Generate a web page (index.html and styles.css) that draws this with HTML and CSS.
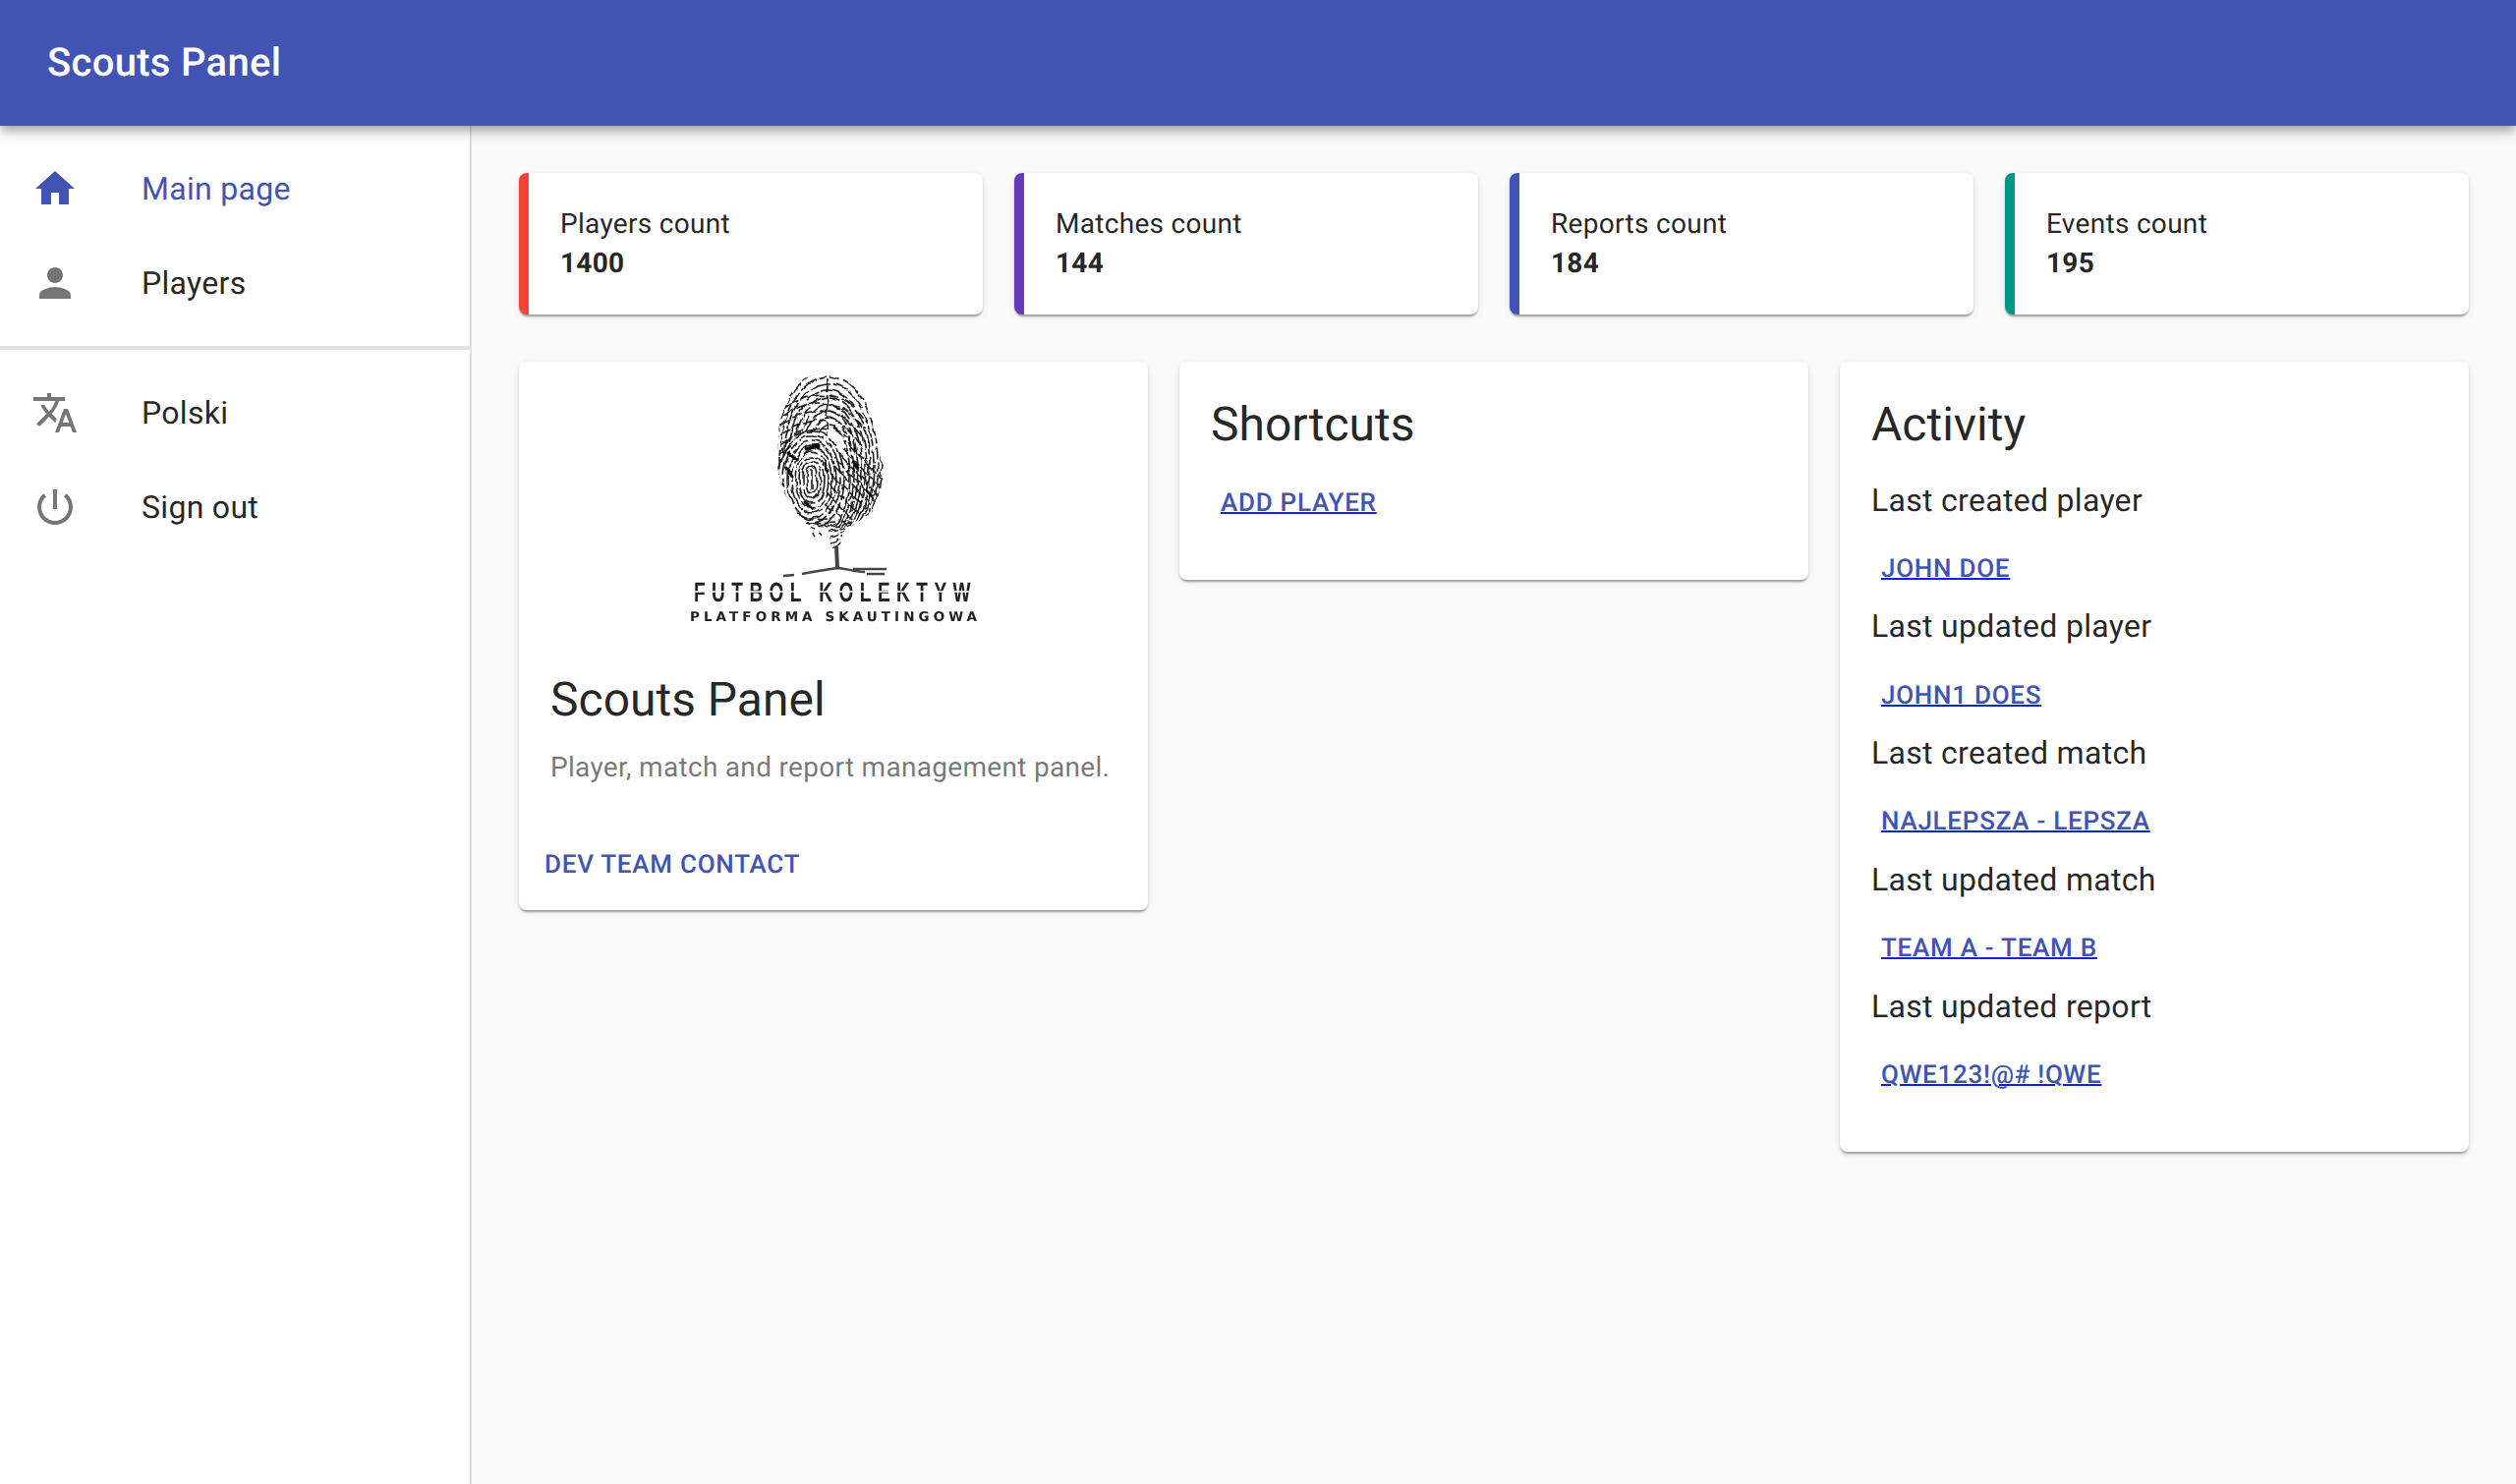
FILE: index.html
```html
<!DOCTYPE html>
<html lang="en">
<head>
<meta charset="utf-8">
<title>Scouts Panel</title>
<link rel="stylesheet" href="styles.css">
</head>
<body>
<header class="appbar"><h1 class="appbar-title">Scouts Panel</h1></header>
<div class="shell">
  <nav class="drawer">
    <ul class="nav-list">
      <li class="nav-item nav-item-active">
        <svg class="nav-icon" viewBox="0 0 24 24"><path d="M10 20v-6h4v6h5v-8h3L12 3 2 12h3v8z"/></svg>
        <span>Main page</span>
      </li>
      <li class="nav-item">
        <svg class="nav-icon" viewBox="0 0 24 24"><path d="M12 12c2.21 0 4-1.79 4-4s-1.79-4-4-4-4 1.79-4 4 1.79 4 4 4zm0 2c-2.67 0-8 1.34-8 4v2h16v-2c0-2.66-5.33-4-8-4z"/></svg>
        <span>Players</span>
      </li>
    </ul>
    <hr class="divider">
    <ul class="nav-list">
      <li class="nav-item">
        <svg class="nav-icon" viewBox="0 0 24 24"><path d="M12.87 15.07l-2.54-2.51.03-.03c1.74-1.94 2.98-4.17 3.71-6.53H17V4h-7V2H8v2H1v1.99h11.17C11.5 7.92 10.44 9.75 9 11.35 8.07 10.32 7.3 9.19 6.69 8h-2c.73 1.63 1.73 3.17 2.98 4.56l-5.09 5.02L4 19l5-5 3.11 3.11.76-2.04zM18.5 10h-2L12 22h2l1.12-3h4.75L21 22h2l-4.5-12zm-2.62 7l1.62-4.33L19.12 17h-3.24z"/></svg>
        <span>Polski</span>
      </li>
      <li class="nav-item">
        <svg class="nav-icon" viewBox="0 0 24 24"><path d="M13 3h-2v10h2V3zm4.83 2.17l-1.42 1.42C17.99 7.86 19 9.81 19 12c0 3.87-3.13 7-7 7s-7-3.13-7-7c0-2.19 1.01-4.14 2.58-5.42L6.17 5.17C4.23 6.82 3 9.26 3 12c0 4.97 4.03 9 9 9s9-4.03 9-9c0-2.74-1.23-5.18-3.17-6.83z"/></svg>
        <span>Sign out</span>
      </li>
    </ul>
  </nav>
  <main class="content">
    <section class="stats">
      <article class="card stat stat-red"><p class="stat-label">Players count</p><p class="stat-value">1400</p></article>
      <article class="card stat stat-purple"><p class="stat-label">Matches count</p><p class="stat-value">144</p></article>
      <article class="card stat stat-indigo"><p class="stat-label">Reports count</p><p class="stat-value">184</p></article>
      <article class="card stat stat-teal"><p class="stat-label">Events count</p><p class="stat-value">195</p></article>
    </section>
    <section class="panels">
      <article class="card">
        <div class="media">
          <svg class="logo" viewBox="528 368 640 280">
            <defs>
              <clipPath id="print"><path d="M842 378C868 378 888 406 892 445C900 470 900 492 894 506C886 530 862 541 842 537C816 537 798 510 792 480C786 450 796 378 842 378Z"/></clipPath>
              <filter id="organic" x="-8%" y="-8%" width="116%" height="116%">
                <feTurbulence type="fractalNoise" baseFrequency="0.07" numOctaves="2" seed="4" result="n"/>
                <feDisplacementMap in="SourceGraphic" in2="n" scale="7" xChannelSelector="R" yChannelSelector="G"/>
                <feGaussianBlur stdDeviation="0.6"/>
              </filter>
              <filter id="soft" x="-5%" y="-20%" width="110%" height="140%"><feGaussianBlur stdDeviation="0.5"/></filter>
            </defs>
            <g filter="url(#organic)">
              <g clip-path="url(#print)" class="ridges">
                <ellipse cx="843" cy="468" rx="54" ry="92" stroke-dasharray="17 3 9 3 26 2"/>
                <ellipse cx="843" cy="470" rx="50" ry="87" stroke-dasharray="11 3 21 2 7 3"/>
                <ellipse cx="843" cy="472" rx="46" ry="82" stroke-dasharray="23 3 13 2"/>
                <ellipse cx="843" cy="474" rx="42" ry="77" stroke-dasharray="9 3 16 2 29 3"/>
                <ellipse cx="843" cy="476" rx="38" ry="72" stroke-dasharray="19 2 11 3"/>
                <ellipse cx="843" cy="478" rx="34" ry="67" stroke-dasharray="13 3 24 2 8 2"/>
                <ellipse cx="843" cy="480" rx="30" ry="62" stroke-dasharray="27 3 12 2"/>
                <ellipse cx="843" cy="482" rx="26" ry="57" stroke-dasharray="10 2 17 2"/>
                <ellipse cx="843" cy="484" rx="22" ry="52" stroke-dasharray="15 2 21 3"/>
                <path d="M800 414C815 404 832 401 842 403M796 424C812 412 830 408 842 411M794 434C810 421 828 416 841 419M793 444C808 431 827 425 840 428M794 453C808 441 826 434 840 437M842 385L841 450" stroke-dasharray="14 3 8 2"/>
                <path d="M844 402C858 404 872 414 882 430M845 410C858 413 870 423 880 439M845 418C858 422 868 432 878 447M846 426C858 430 868 440 875 454M847 434C856 438 864 446 870 458" stroke-dasharray="10 3 15 3"/>
                <g class="whorl">
                  <ellipse cx="826" cy="488" rx="33" ry="49" stroke-dasharray="21 3 12 2"/>
                  <ellipse cx="826" cy="488" rx="29" ry="44" stroke-dasharray="25 3 9 3"/>
                  <ellipse cx="826" cy="488" rx="25" ry="39" stroke-dasharray="14 2 19 3"/>
                  <ellipse cx="826" cy="488" rx="21" ry="34" stroke-dasharray="30 3 17 2"/>
                  <ellipse cx="826" cy="488" rx="17" ry="29" stroke-dasharray="17 3 11 2"/>
                  <ellipse cx="826" cy="488" rx="13" ry="24" stroke-dasharray="24 3"/>
                  <ellipse cx="826" cy="488" rx="9" ry="19" stroke-dasharray="36 3"/>
                  <ellipse cx="826" cy="488" rx="5" ry="14"/>
                  <path d="M826 478L826 498"/>
                </g>
                <path d="M858 456L895 496M855 462L893 504M852 468L890 510M849 474L886 514M846 482L881 518M843 492L875 523M841 502L868 528M838 512L861 532M863 450L897 488" stroke-dasharray="13 3 8 2 17 2"/>
                <path d="M794 462C798 450 806 440 816 438M793 474C796 466 800 458 806 452M800 512C812 526 826 530 842 528M805 522C816 532 830 534 848 532" stroke-dasharray="8 3 12 2"/>
                <path class="blot" d="M802 462L810 468M800 476L805 484M820 512L828 518M882 500L887 505M820 458L832 454M838 472L843 479M868 470L873 476"/>
              </g>
              <path class="ridges thin" d="M823 530L827 533M826 537L829 539M830 532L834 536M827 542L829 545M833 541L836 543"/>
              <path class="ridges thin" d="M845 537C852 536 860 534 868 530M843 541C850 541 858 538 864 535M845 546C851 545 856 542 860 539M846 551C851 550 855 547 857 544M848 556C852 555 855 552 856 549" stroke-dasharray="9 2 6 2"/>
            </g>
            <g filter="url(#soft)">
              <path class="trunk" d="M851 556L852 577"/>
              <path class="ground" d="M797 586L808 585M816 584C826 582 838 580 852 578C860 578 868 582 880 582M868 579L902 579M882 584L900 584"/>
              <text class="logo-title" transform="translate(706 612) scale(0.68 1)" textLength="414" lengthAdjust="spacing">FUTBOL KOLEKTYW</text>
              <path class="stencil" d="M700 602H992"/>
              <text class="logo-sub" x="702" y="632" textLength="292" lengthAdjust="spacing">PLATFORMA SKAUTINGOWA</text>
            </g>
          </svg>
        </div>
        <div class="card-body">
          <h2 class="h5 h5-gutter">Scouts Panel</h2>
          <p class="muted">Player, match and report management panel.</p>
        </div>
        <div class="card-actions"><a class="btn btn-plain" href="#">DEV TEAM CONTACT</a></div>
      </article>
      <article class="card card-body card-body-tall">
        <h2 class="h5 h5-gutter">Shortcuts</h2>
        <a class="btn" href="#">ADD PLAYER</a>
      </article>
      <article class="card card-body card-body-tall">
        <h2 class="h5 h5-gutter">Activity</h2>
        <h3 class="subtitle">Last created player</h3>
        <a class="btn" href="#">JOHN DOE</a>
        <h3 class="subtitle">Last updated player</h3>
        <a class="btn" href="#">JOHN1 DOES</a>
        <h3 class="subtitle">Last created match</h3>
        <a class="btn" href="#">NAJLEPSZA - LEPSZA</a>
        <h3 class="subtitle">Last updated match</h3>
        <a class="btn" href="#">TEAM A - TEAM B</a>
        <h3 class="subtitle">Last updated report</h3>
        <a class="btn" href="#">QWE123!@# !QWE</a>
      </article>
    </section>
  </main>
</div>
</body>
</html>
```
FILE: styles.css
```css
* { box-sizing: border-box; }
html, body { height: 100%; }
body {
  margin: 0;
  display: flex;
  flex-direction: column;
  overflow: hidden;
  background: #fafafa;
  color: rgba(0, 0, 0, 0.87);
  font-family: Roboto, "Liberation Sans", sans-serif;
  text-rendering: geometricPrecision;
}
p, h1, h2, h3, ul { margin: 0; padding: 0; }
ul { list-style: none; }

.appbar {
  position: relative;
  z-index: 2;
  flex: none;
  height: 128px;
  display: flex;
  align-items: center;
  padding: 0 48px;
  background: #4154b3;
  color: #fff;
  box-shadow: 0 4px 8px -2px rgba(0,0,0,.2), 0 8px 10px 0 rgba(0,0,0,.14), 0 2px 20px 0 rgba(0,0,0,.12);
}
.appbar-title { font-size: 40px; font-weight: 500; line-height: 1.6; letter-spacing: 0.0075em; }

.shell { flex: 1; display: flex; min-height: 0; }
.drawer {
  flex: none;
  width: 480px;
  background: #fff;
  border-right: 2px solid #e0e0e0;
}
.nav-list { padding: 16px 0; }
.nav-item {
  height: 96px;
  display: flex;
  align-items: center;
  padding: 0 32px;
  font-size: 32px;
  line-height: 1.5;
  letter-spacing: 0.00938em;
}
.nav-icon { flex: none; width: 48px; height: 48px; margin-right: 64px; fill: rgba(0, 0, 0, 0.54); }
.nav-item-active { color: #4154b3; }
.nav-item-active .nav-icon { fill: #4154b3; }
.divider { margin: 0; height: 4px; border: 0; background: #e0e0e0; }

.content { flex: 1; min-width: 0; padding: 48px; display: flex; flex-direction: column; gap: 48px; }
.stats { display: grid; grid-template-columns: repeat(4, 1fr); gap: 32px; }
.panels { display: grid; grid-template-columns: repeat(3, 1fr); gap: 32px; align-items: start; }

.card {
  background: #fff;
  border-radius: 8px;
  overflow: hidden;
  box-shadow: 0 4px 2px -2px rgba(0,0,0,.2), 0 2px 2px 0 rgba(0,0,0,.14), 0 2px 6px 0 rgba(0,0,0,.12);
}
.stat { padding: 32px; height: 144px; border-left: 10px solid; }
.stat-red { border-left-color: #f44336; }
.stat-purple { border-left-color: #673ab7; }
.stat-indigo { border-left-color: #4154b3; }
.stat-teal { border-left-color: #009688; }
.stat-label, .stat-value { font-size: 28px; line-height: 40px; letter-spacing: 0.01071em; }
.stat-value { font-weight: 700; }

.media { height: 280px; }
.logo { display: block; width: 100%; height: 100%; }
.ridges { fill: none; stroke: #1c1c1c; stroke-width: 1.6; }
.thin { stroke-width: 1.4; }
.whorl ellipse { fill: #fff; }
.blot { fill: none; stroke: #111; stroke-width: 3; stroke-linecap: round; }
.trunk { fill: none; stroke: #444; stroke-width: 4; }
.ground { fill: none; stroke: #444; stroke-width: 2.4; }
.stencil { fill: none; stroke: #fff; stroke-width: 1.4; }
.logo-title { font-family: "Liberation Sans", sans-serif; font-size: 28px; font-weight: 700; fill: #222; }
.logo-sub { font-family: "DejaVu Sans", sans-serif; font-size: 13.5px; font-weight: 700; fill: #222; }

.card-body { padding: 32px; }
.card-body-tall { padding-bottom: 48px; }
.h5 { font-size: 48px; font-weight: 400; line-height: 64px; }
.h5-gutter { margin-bottom: 16.8px; }
.muted { font-size: 28px; line-height: 40px; letter-spacing: 0.01071em; color: rgba(0, 0, 0, 0.54); }
.card-actions { padding: 16px; }
.subtitle { font-size: 32px; font-weight: 400; line-height: 56px; margin-bottom: 11.2px; letter-spacing: 0.00938em; }

.btn {
  display: block;
  width: fit-content;
  height: 61.5px;
  padding: 9px 10px 7px;
  font-size: 26px;
  font-weight: 500;
  line-height: 45.5px;
  letter-spacing: 0.02857em;
  color: #4154b3;
  text-decoration: underline 2px #0b22e0;
}
.btn-plain { text-decoration: none; }
```
